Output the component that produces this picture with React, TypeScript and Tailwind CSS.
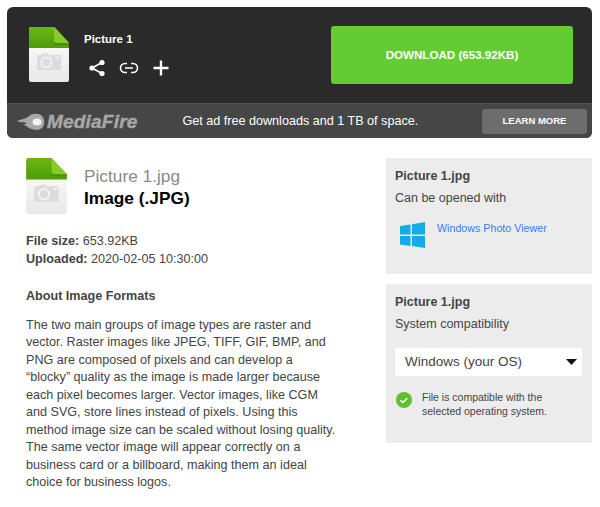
import React from "react";

function FileIcon({ w, h }: { w: number; h: number }) {
  return (
    <svg width={w} height={h} viewBox="0 0 40 55" className="shrink-0">
      <defs>
        <linearGradient id="fg" x1="0" y1="0" x2="0" y2="1">
          <stop offset="0" stopColor="#ffffff" />
          <stop offset="1" stopColor="#e8e8e8" />
        </linearGradient>
        <linearGradient id="gg" x1="0" y1="0" x2="0" y2="1">
          <stop offset="0" stopColor="#6bb814" />
          <stop offset="1" stopColor="#4f9a08" />
        </linearGradient>
      </defs>
      <path d="M2 0H25L40 16V53a2 2 0 0 1-2 2H2a2 2 0 0 1-2-2V2a2 2 0 0 1 2-2z" fill="url(#fg)" />
      <path d="M2 0H25L40 16V21H0V2a2 2 0 0 1 2-2z" fill="url(#gg)" />
      <path d="M25 0L40 16H28a3 3 0 0 1-3-3z" fill="#84cc2a" />
      <path d="M25 13a3 3 0 0 0 3 3H40v2H28a3 3 0 0 1-3-3z" fill="#3f7f06" opacity="0.5" />
      <path d="M9 28h3l1-1.500h6l1 1.500h11a1 1 0 0 1 1 1v13a1 1 0 0 1-1 1H9a1 1 0 0 1-1-1V29a1 1 0 0 1 1-1z" fill="#dcdcdc" />
      <circle cx="17.500" cy="35.500" r="6" fill="#f2f2f2" />
      <circle cx="17.500" cy="35.500" r="4" fill="#dcdcdc" />
      <rect x="27" y="29.500" width="3" height="2" fill="#f4f4f4" />
    </svg>
  );
}

function Logo() {
  return (
    <div className="flex items-center">
      <svg width="28" height="17" viewBox="0 0 28 17">
        <path d="M0 8C5 6 9 6 12 3c4-3 10-3 13 0 3 3 3 9 0 12-3 3-9 2-13 0-2-1-3-3-6-3 2-1 3-1 4-2-3-1-6 0-10-2z" fill="#a8a8a8" />
        <ellipse cx="20" cy="9" rx="4.500" ry="3.500" fill="#f2f2f2" />
      </svg>
      <span className="ml-[2px] text-[19px] font-bold italic leading-none tracking-[0.2px] text-[#a6a6a6] [font-family:'Liberation_Sans',sans-serif] [-webkit-text-stroke:0.5px_#a6a6a6]">
        MediaFire
      </span>
    </div>
  );
}

export default function App() {
  return (
    <div className="w-[600px] h-[507px] overflow-hidden bg-white pt-[7px] text-[#444] [font-family:'Liberation_Sans',Arial,sans-serif]">
      <div className="ml-[7px] w-[585px] overflow-hidden rounded-[6px] bg-[#2a2a2a]">
        <div className="flex h-[96px] items-start pl-[22px] pr-[19px]">
          <div className="mt-[20px]">
            <FileIcon w={40} h={55} />
          </div>
          <div className="ml-[15px] mt-[25px]">
            <div className="text-[11.500px] font-bold leading-[14px] text-white">Picture 1</div>
            <div className="mt-[13px] flex items-center">
              <svg width="18" height="18" viewBox="0 0 18 18" className="ml-[4px]">
                <path d="M14 3.500L4 9l10 5.500" fill="none" stroke="#fff" strokeWidth="1.700" />
                <circle cx="14" cy="3.500" r="2.600" fill="#fff" />
                <circle cx="4" cy="9" r="2.600" fill="#fff" />
                <circle cx="14" cy="14.500" r="2.600" fill="#fff" />
              </svg>
              <svg width="20" height="12" viewBox="0 0 20 12" className="ml-[13px]">
                <path d="M8 1.500H6a4.500 4.500 0 0 0 0 9h2M12 1.500h2a4.500 4.500 0 0 1 0 9h-2M6 6h8" fill="none" stroke="#fff" strokeWidth="1.600" />
              </svg>
              <svg width="16" height="16" viewBox="0 0 16 16" className="ml-[14px]">
                <path d="M8 .5v15M.5 8h15" stroke="#fff" strokeWidth="2.400" />
              </svg>
            </div>
          </div>
          <button className="ml-auto mt-[19px] flex h-[58px] w-[242px] items-center justify-center rounded-[3px] bg-[#63cc32] text-[11.600px] font-bold text-white">
            DOWNLOAD (653.92KB)
          </button>
        </div>
        <div className="flex h-[35px] items-center border-t border-[#555] bg-[#464646] pl-[10px] pr-[5px]">
          <Logo />
          <span className="ml-[45px] text-[12.600px] text-white">Get ad free downloads and 1 TB of space.</span>
          <button className="ml-auto h-[25px] w-[105px] rounded-[3px] bg-[#6d6d6d] text-[9.500px] font-bold text-white">
            LEARN MORE
          </button>
        </div>
      </div>

      <div className="mt-[20px] flex">
        <div className="ml-[26px] w-[310px]">
          <div className="flex">
            <FileIcon w={41} h={56} />
            <div className="ml-[17px] mt-[8px]">
              <div className="text-[17.300px] leading-[20px] text-[#8a8a8a]">Picture 1.jpg</div>
              <div className="mt-[2px] text-[17.300px] font-bold leading-[20px] text-black">Image (.JPG)</div>
            </div>
          </div>
          <div className="mt-[19px] text-[12.600px] leading-[17.500px]">
            <div><b>File size:</b> 653.92KB</div>
            <div><b>Uploaded:</b> 2020-02-05 10:30:00</div>
          </div>
          <div className="mt-[20px] text-[12.600px] font-bold leading-[17.500px]">About Image Formats</div>
          <p className="mt-[11px] text-[12.600px] leading-[17.500px]">
            The two main groups of image types are raster and vector. Raster images like JPEG, TIFF, GIF, BMP, and PNG are composed of pixels and can develop a “blocky” quality as the image is made larger because each pixel becomes larger. Vector images, like CGM and SVG, store lines instead of pixels. Using this method image size can be scaled without losing quality. The same vector image will appear correctly on a business card or a billboard, making them an ideal choice for business logos.
          </p>
        </div>
        <div className="ml-[50px] w-[206px]">
          <div className="h-[116px] bg-[#ececec] px-[9px] pt-[10px]">
            <div className="text-[12.500px] font-bold leading-[16px]">Picture 1.jpg</div>
            <div className="mt-[6px] text-[12.500px] leading-[16px]">Can be opened with</div>
            <div className="mt-[14px] flex items-start">
              <svg width="25" height="26" viewBox="0 0 25 26" className="ml-[5px] mt-[2px] shrink-0">
                <path d="M0 4l10.500-1.500v10H0zM12 2.300L25 0v12.500H12zM0 14h10.500v10L0 22.500zM12 14h13v12l-13-2z" fill="#12ade6" />
              </svg>
              <span className="ml-[12px] mt-[1px] text-[10.700px] leading-[14px] text-[#3c78ff]">Windows Photo Viewer</span>
            </div>
          </div>
          <div className="mt-[10px] h-[159px] bg-[#ececec] px-[9px] pt-[10px]">
            <div className="text-[12.500px] font-bold leading-[16px]">Picture 1.jpg</div>
            <div className="mt-[6px] text-[12.500px] leading-[16px]">System compatibility</div>
            <div className="mt-[16px] flex h-[28px] w-[187px] items-center justify-between bg-white pl-[10px] pr-[4px] text-[13.500px]">
              <span>Windows (your OS)</span>
              <svg width="11" height="6" viewBox="0 0 11 6" className="mr-[1px]">
                <path d="M0 0h11L5.500 6z" fill="#111" />
              </svg>
            </div>
            <div className="mt-[15px] flex items-start">
              <svg width="16" height="16" viewBox="0 0 16 16" className="ml-[1px] mt-[1px] shrink-0">
                <circle cx="8" cy="8" r="8" fill="#5fc132" />
                <path d="M4.500 8.200l2.300 2.300 4.500-4.300" fill="none" stroke="#fff" strokeWidth="1.500" />
              </svg>
              <div className="ml-[10px] text-[10.500px] leading-[13.500px]">
                File is compatible with the<br />selected operating system.
              </div>
            </div>
          </div>
        </div>
      </div>
    </div>
  );
}
